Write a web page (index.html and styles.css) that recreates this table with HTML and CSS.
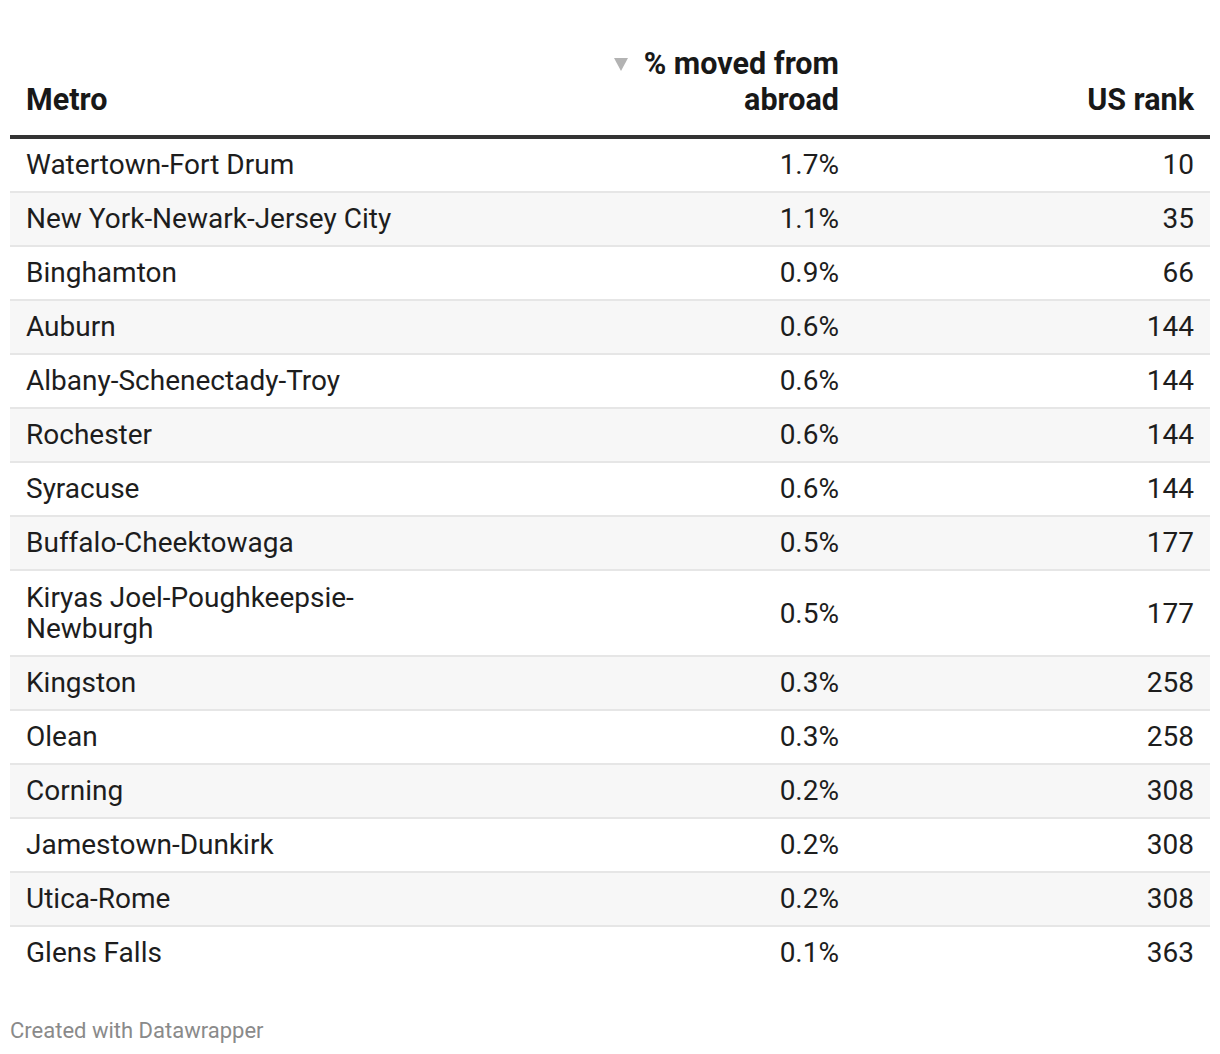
FILE: index.html
```html
<!DOCTYPE html>
<html>
<head>
<meta charset="utf-8">
<link rel="stylesheet" href="styles.css">
</head>
<body>
<div class="chart">
  <table class="dw-table">
    <colgroup>
      <col class="c-metro">
      <col class="c-pct">
      <col class="c-rank">
    </colgroup>
    <thead>
      <tr>
        <th class="left">Metro</th>
        <th class="right"><span class="sort"><svg width="16" height="14" viewBox="0 0 16 14"><path d="M1 1 H15 L8 14 Z" fill="#b3b3b3"/></svg></span>% moved from<br>abroad</th>
        <th class="right">US rank</th>
      </tr>
    </thead>
    <tbody>
      <tr><td>Watertown-Fort Drum</td><td class="num">1.7%</td><td class="num">10</td></tr>
      <tr><td>New York-Newark-Jersey City</td><td class="num">1.1%</td><td class="num">35</td></tr>
      <tr><td>Binghamton</td><td class="num">0.9%</td><td class="num">66</td></tr>
      <tr><td>Auburn</td><td class="num">0.6%</td><td class="num">144</td></tr>
      <tr><td>Albany-Schenectady-Troy</td><td class="num">0.6%</td><td class="num">144</td></tr>
      <tr><td>Rochester</td><td class="num">0.6%</td><td class="num">144</td></tr>
      <tr><td>Syracuse</td><td class="num">0.6%</td><td class="num">144</td></tr>
      <tr><td>Buffalo-Cheektowaga</td><td class="num">0.5%</td><td class="num">177</td></tr>
      <tr class="tall"><td>Kiryas Joel-Poughkeepsie-Newburgh</td><td class="num">0.5%</td><td class="num">177</td></tr>
      <tr><td>Kingston</td><td class="num">0.3%</td><td class="num">258</td></tr>
      <tr><td>Olean</td><td class="num">0.3%</td><td class="num">258</td></tr>
      <tr><td>Corning</td><td class="num">0.2%</td><td class="num">308</td></tr>
      <tr><td>Jamestown-Dunkirk</td><td class="num">0.2%</td><td class="num">308</td></tr>
      <tr><td>Utica-Rome</td><td class="num">0.2%</td><td class="num">308</td></tr>
      <tr class="last"><td>Glens Falls</td><td class="num">0.1%</td><td class="num">363</td></tr>
    </tbody>
  </table>
  <div class="footer">Created with Datawrapper</div>
</div>
</body>
</html>
```
FILE: styles.css
```css
html, body {
  margin: 0;
  padding: 0;
  background: #ffffff;
}
body {
  font-family: Roboto, "Liberation Sans", sans-serif;
  color: #1d1d1d;
}
.chart {
  padding: 43px 10px 0 10px;
}
.dw-table {
  width: 1200px;
  border-collapse: collapse;
  table-layout: fixed;
}
.c-metro { width: 430px; }
.c-pct { width: 415px; }
.c-rank { width: 355px; }
th {
  font-weight: 700;
  font-size: 30.5px;
  line-height: 36px;
  padding: 0 16px 17px 16px;
  vertical-align: bottom;
  border-bottom: 4px solid #333333;
  color: #181818;
}
th.left { text-align: left; }
th.right { text-align: right; }
.sort {
  display: inline-block;
  margin-right: 15px;
  vertical-align: 3px;
}
td {
  font-size: 28px;
  line-height: 31px;
  padding: 10px 16px 11px 16px;
  border-bottom: 2px solid #e6e6e6;
  vertical-align: middle;
  color: #1d1d1d;
}
tr.tall td {
  padding-top: 11px;
}
td.num { text-align: right; }
tbody tr:nth-child(even) td { background: #f7f7f7; }
tbody tr.last td { border-bottom: none; }
.footer {
  margin-top: 40px;
  font-size: 22px;
  line-height: 24px;
  color: #8a8a8a;
}
```
